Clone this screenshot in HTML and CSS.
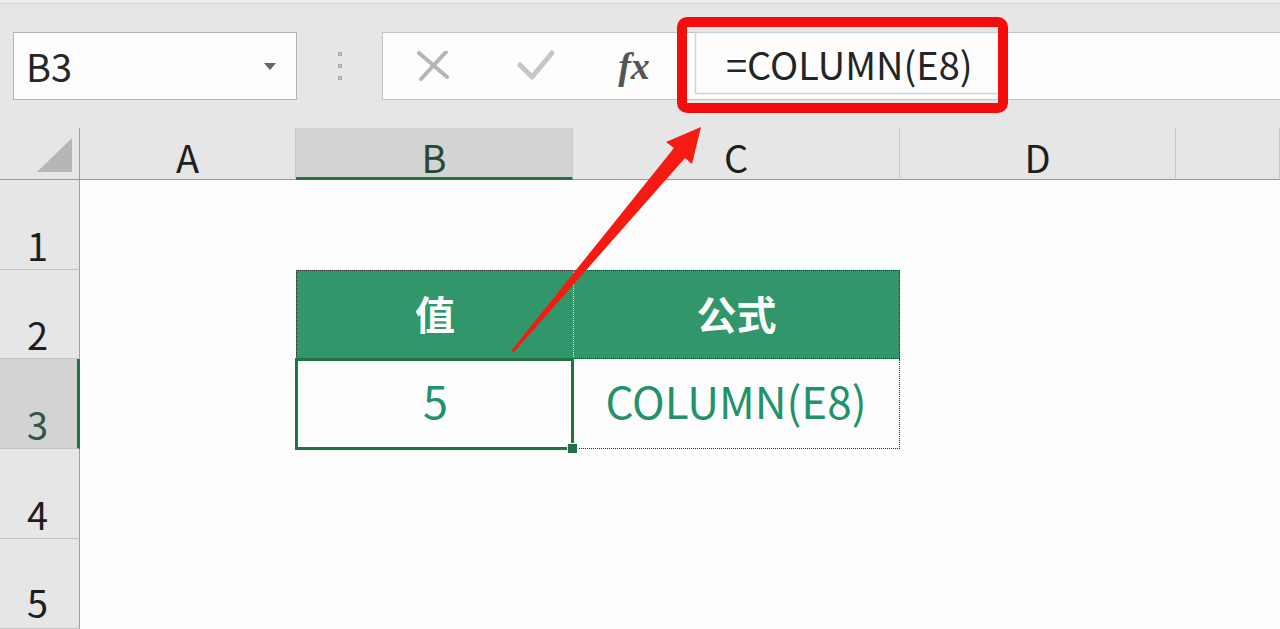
FILE: index.html
```html
<!DOCTYPE html>
<html lang="zh-CN">
<head>
<meta charset="utf-8">
<title>COLUMN</title>
<link rel="stylesheet" href="styles.css">
</head>
<body>
<div class="topline"></div>
<div class="toolbar">
  <div class="namebox"><span class="ref">B3</span><span class="caret"></span></div>
  <div class="grip"><i></i><i></i><i></i></div>
  <div class="fbar">
    <div class="fbtns">
      <span class="btn b1"><svg width="32" height="30" viewBox="0 0 32 30"><path d="M2 2 L30 26 M29 1 L4 28" stroke="#b5b5b5" stroke-width="4" stroke-linecap="round" fill="none"/></svg></span>
      <span class="btn b2"><svg width="38" height="32" viewBox="0 0 38 32"><path d="M3 15 L15 27 L35 3" stroke="#c6c6c6" stroke-width="5" stroke-linecap="round" stroke-linejoin="round" fill="none"/></svg></span>
      <span class="btn b3"><span class="fx">fx</span></span>
    </div>
    <div class="finput">=COLUMN(E8)</div>
  </div>
</div>
<div class="sheet">
  <div class="corner"><span class="tri"></span></div>
  <div class="ch">A</div>
  <div class="ch selcol">B</div>
  <div class="ch">C</div>
  <div class="ch">D</div>
  <div class="ch"></div>

  <div class="rh">1</div>
  <div class="c"></div><div class="c"></div><div class="c"></div><div class="c"></div><div class="c"></div>

  <div class="rh">2</div>
  <div class="c"></div>
  <div class="c hd hdb">值</div>
  <div class="c hd hdc">公式</div>
  <div class="c"></div><div class="c"></div>

  <div class="rh selrow">3</div>
  <div class="c"></div>
  <div class="c val valb">5<span class="selbox"><span class="handle"></span></span></div>
  <div class="c val valc">COLUMN(E8)</div>
  <div class="c"></div><div class="c"></div>

  <div class="rh">4</div>
  <div class="c"></div><div class="c"></div><div class="c"></div><div class="c"></div><div class="c"></div>

  <div class="rh last">5</div>
  <div class="c"></div><div class="c"></div><div class="c"></div><div class="c"></div><div class="c"></div>
</div>
<svg class="annot" width="1280" height="629" viewBox="0 0 1280 629">
  <rect x="695.5" y="32.5" width="303" height="61" fill="none" stroke="#c9d6e0" stroke-width="1.5"/>
  <rect x="682" y="22" width="321" height="86" rx="5" ry="5" fill="none" stroke="#f50d0d" stroke-width="10"/>
  <polygon points="511,351 674,148 666,142 701,127 692,164 685,158 514,352" fill="#f51a12"/>
</svg>
</body>
</html>
```

FILE: styles.css
```css
html, body {
  margin: 0;
  padding: 0;
}
body {
  width: 1280px;
  height: 629px;
  overflow: hidden;
  position: relative;
  background: #e6e6e6;
  font-family: "Noto Sans CJK SC", "Noto Sans", sans-serif;
  color: #222;
}
.topline {
  height: 3px;
  background: #eeeeee;
  border-bottom: 1px solid #d2d2d2;
}
.toolbar {
  display: flex;
  height: 68px;
  margin-top: 28px;
}
.namebox {
  width: 284px;
  margin-left: 13px;
  box-sizing: border-box;
  border: 1px solid #b3b3b3;
  background: #fdfdfd;
  display: flex;
  align-items: center;
  justify-content: space-between;
  padding: 0 20px 0 12px;
}
.ref {
  font-size: 38px;
  line-height: 1;
  color: #262626;
}
.caret {
  width: 0;
  height: 0;
  border-left: 6px solid transparent;
  border-right: 6px solid transparent;
  border-top: 7px solid #666;
}
.grip {
  width: 85px;
  display: flex;
  flex-direction: column;
  align-items: center;
  justify-content: center;
  gap: 8px;
}
.grip i {
  display: block;
  width: 4px;
  height: 4px;
  background: #c4c4c4;
  border: 1px solid #a8a8a8;
  box-sizing: border-box;
}
.fbar {
  flex: 1;
  display: flex;
  background: #fdfdfd;
  border: 1px solid #c4c4c4;
  border-right: none;
}
.fbtns {
  width: 312px;
  display: flex;
  align-items: center;
}
.btn {
  display: flex;
  align-items: center;
  justify-content: center;
}
.b1 { width: 100px; }
.b2 { width: 106px; }
.b3 { width: 90px; }
.fx {
  font-family: "Liberation Serif", serif;
  font-style: italic;
  font-weight: bold;
  font-size: 38px;
  line-height: 1;
  color: #555;
}
.finput {
  flex: 1;
  display: flex;
  align-items: center;
  padding-left: 31px;
  padding-bottom: 6px;
  font-size: 38px;
  color: #242424;
}
.sheet {
  margin-top: 28px;
  display: grid;
  grid-template-columns: 80px 216px 277px 327px 276px 104px;
  grid-template-rows: 52px 90px 89px 90px 90px 90px;
}
.sheet > div {
  box-sizing: border-box;
}
.corner {
  border-right: 1px solid #9f9f9f;
  border-bottom: 1px solid #9a9a9a;
  position: relative;
}
.tri {
  position: absolute;
  right: 7px;
  bottom: 7px;
  width: 0;
  height: 0;
  border-left: 35px solid transparent;
  border-bottom: 34px solid #b6b6b6;
}
.ch {
  border-right: 1px solid #c9c9c9;
  border-bottom: 1px solid #9a9a9a;
  display: flex;
  align-items: flex-end;
  justify-content: center;
  padding-bottom: 3px;
  font-size: 38px;
  line-height: 1;
  color: #1e1e1e;
}
.selcol {
  background: #d3d3d3;
  border-bottom: 3px solid #217346;
  padding-bottom: 1px;
  color: #24493a;
}
.rh {
  border-right: 1px solid #9f9f9f;
  border-bottom: 1px solid #c4c4c4;
  display: flex;
  align-items: flex-end;
  justify-content: center;
  padding-bottom: 5px;
  padding-right: 4px;
  font-size: 38px;
  line-height: 1;
  color: #1e1e1e;
}
.rh.last {
  padding-bottom: 7px;
}
.selrow {
  background: #d3d3d3;
  border-right: 3px solid #217346;
  padding-right: 2px;
  color: #34564a;
}
.c {
  background: #fdfdfd;
}
.hd {
  background: #31976a;
  color: #fff;
  font-weight: bold;
  font-size: 40px;
  line-height: 1;
  display: flex;
  align-items: center;
  justify-content: center;
  padding-bottom: 4px;
  border-top: 1px dotted #2a2a2a;
}
.hdb {
  border-left: 1px dotted #2a2a2a;
}
.hdc {
  border-left: 1px dotted #d6efe3;
  border-right: 1px dotted #2a2a2a;
  border-bottom: 1px dotted #2a2a2a;
}
.val {
  color: #22926a;
  display: flex;
  align-items: center;
  justify-content: center;
  line-height: 1;
}
.valb {
  position: relative;
  font-size: 45px;
  padding-left: 2px;
  padding-bottom: 10px;
}
.valc {
  font-size: 44px;
  padding-bottom: 8px;
  border-right: 1px dotted #2a2a2a;
  border-bottom: 1px dotted #2a2a2a;
}
.selbox {
  position: absolute;
  left: -1px;
  top: -1px;
  right: -1px;
  bottom: -1px;
  border: 3px solid #217346;
}
.handle {
  position: absolute;
  right: -7px;
  bottom: -7px;
  width: 9px;
  height: 9px;
  background: #217346;
  border: 1px solid #fdfdfd;
}
.annot {
  position: absolute;
  left: 0;
  top: 0;
  pointer-events: none;
}
```
